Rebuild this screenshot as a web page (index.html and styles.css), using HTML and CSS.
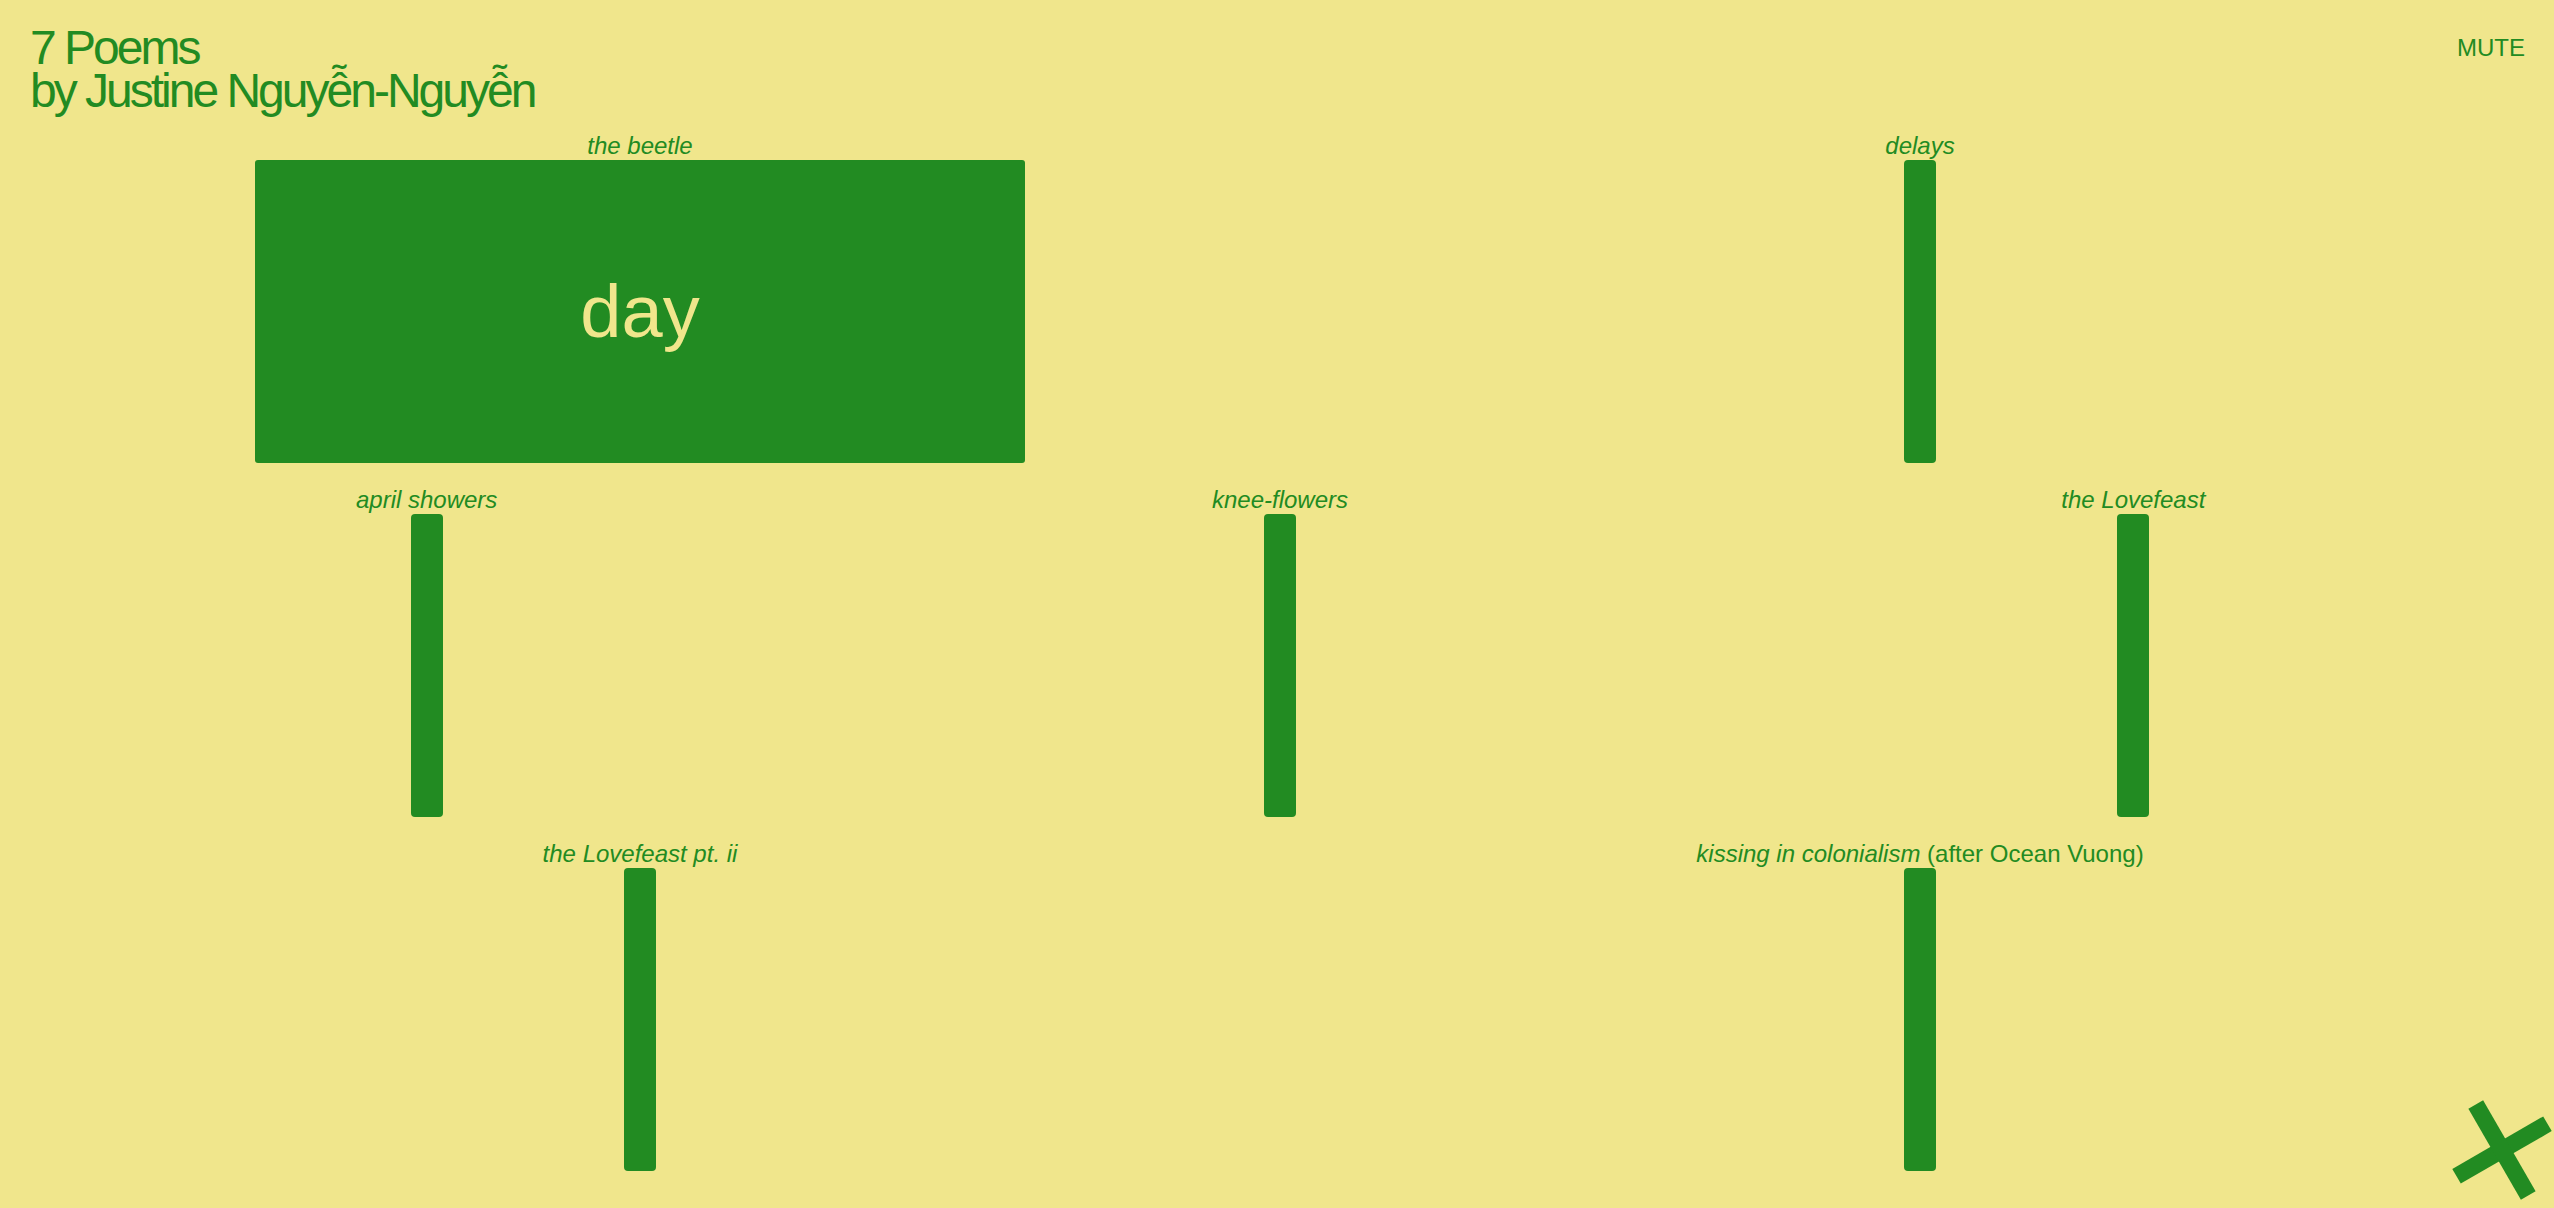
FILE: index.html
```html
<!DOCTYPE html>
<html lang="en">
<head>
<meta charset="utf-8">
<title>7 Poems by Justine Nguyễn-Nguyễn</title>
<link rel="stylesheet" href="styles.css">
</head>
<body>
<header class="top">
  <h1 class="title"><span class="title-line">7 Poems</span><span class="title-line">by Justine Nguyễn-Nguyễn</span></h1>
  <button class="mute" type="button">MUTE</button>
</header>
<main class="rows">
  <section class="row row-two">
    <div class="poem">
      <div class="label"><em>the beetle</em></div>
      <div class="card"><span class="card-text">day</span></div>
    </div>
    <div class="poem">
      <div class="label"><em>delays</em></div>
      <div class="bar"></div>
    </div>
  </section>
  <section class="row row-three">
    <div class="poem">
      <div class="label"><em>april showers</em></div>
      <div class="bar"></div>
    </div>
    <div class="poem">
      <div class="label"><em>knee-flowers</em></div>
      <div class="bar"></div>
    </div>
    <div class="poem">
      <div class="label"><em>the Lovefeast</em></div>
      <div class="bar"></div>
    </div>
  </section>
  <section class="row row-two">
    <div class="poem">
      <div class="label"><em>the Lovefeast pt. ii</em></div>
      <div class="bar"></div>
    </div>
    <div class="poem">
      <div class="label"><em>kissing in colonialism</em> (after Ocean Vuong)</div>
      <div class="bar"></div>
    </div>
  </section>
</main>
<svg class="close" width="104" height="110" viewBox="0 0 104 110" aria-label="close">
  <g transform="translate(52 55) rotate(-30)" fill="#228B22">
    <rect x="-52.5" y="-8.5" width="105" height="17"/>
    <rect x="-8.5" y="-52.5" width="17" height="105"/>
  </g>
</svg>
</body>
</html>
```
FILE: styles.css
```css
html, body {
  margin: 0;
  padding: 0;
  overflow: hidden;
}
body {
  background: #F0E68C;
  color: #228B22;
  font-family: "Liberation Sans", Arial, sans-serif;
  width: 2554px;
  height: 1208px;
  position: relative;
}
.top {
  box-sizing: border-box;
  height: 132px;
  padding: 26px 29px 0 30px;
  display: flex;
  justify-content: space-between;
  align-items: flex-start;
}
.title {
  margin: 0;
  font-size: 48px;
  font-weight: normal;
  line-height: 0.9;
  letter-spacing: -3px;
}
.title-line {
  display: block;
  white-space: nowrap;
}
.mute {
  margin-top: 8px;
  padding: 0;
  border: 0;
  background: none;
  color: #228B22;
  font-family: "Liberation Sans", Arial, sans-serif;
  font-size: 24px;
  line-height: 28px;
  cursor: pointer;
}
.rows {
  width: 2560px;
  display: flex;
  flex-direction: column;
  gap: 23px;
}
.row {
  display: grid;
}
.row-two {
  grid-template-columns: repeat(2, 1fr);
}
.row-three {
  grid-template-columns: repeat(3, 1fr);
}
.poem {
  display: flex;
  flex-direction: column;
  align-items: center;
}
.label {
  font-size: 24px;
  line-height: 28px;
  white-space: nowrap;
}
.bar {
  width: 32px;
  height: 303px;
  background: #228B22;
  border-radius: 4px;
}
.card {
  width: 770px;
  height: 303px;
  background: #228B22;
  border-radius: 3px;
  display: flex;
  align-items: center;
  justify-content: center;
}
.card-text {
  color: #F0E68C;
  font-size: 74px;
  line-height: normal;
}
.close {
  position: absolute;
  right: 0;
  bottom: 3px;
  display: block;
}
```
